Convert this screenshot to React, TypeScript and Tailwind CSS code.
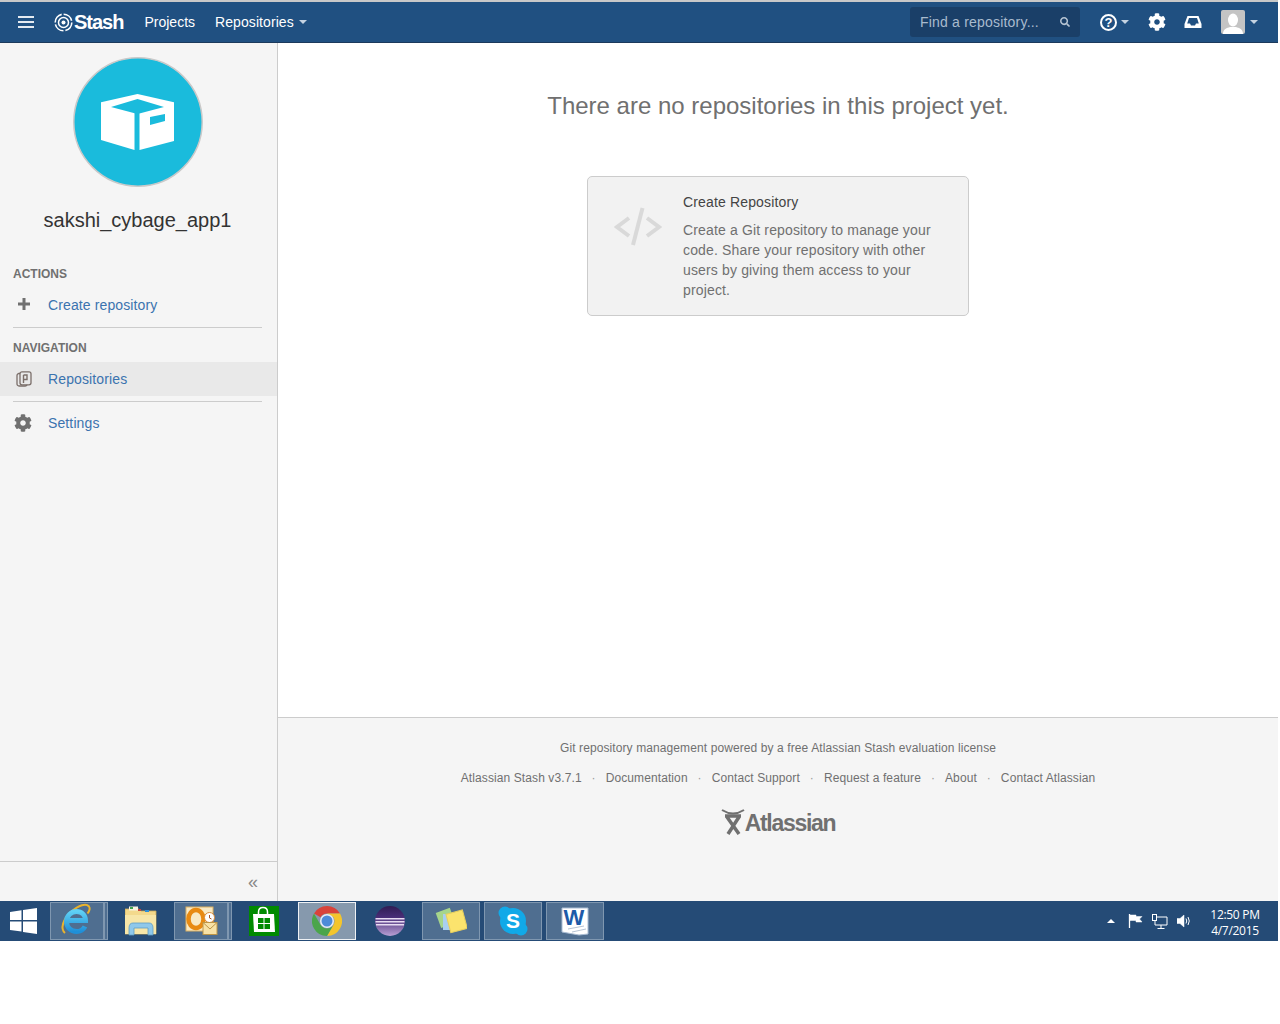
import React from 'react';
import { FaCog, FaSearch } from 'react-icons/fa';

const sans = "font-['Liberation_Sans',Arial,sans-serif]";

const Caret = ({ className = 'border-t-[#c5d3e2]' }: { className?: string }) => (
  <span className={`inline-block w-0 h-0 border-x-4 border-x-transparent border-t-4 ${className}`} />
);

const StashLogo = () => (
  <svg width="19" height="19" viewBox="0 0 19 19" fill="none" stroke="#fff">
    <circle cx="9.5" cy="9.5" r="8.3" strokeWidth="1.6" strokeDasharray="11 2" />
    <circle cx="9.5" cy="9.5" r="5" strokeWidth="1.5" />
    <circle cx="9.5" cy="9.5" r="2" fill="#fff" strokeWidth="0" />
  </svg>
);

const BoxIcon = () => (
  <svg width="130" height="130" viewBox="0 0 130 130" className="block">
    <circle cx="65" cy="65" r="64.2" fill="#1abbdc" stroke="#c9c9c9" strokeWidth="1.5" />
    <polygon fill="#fff" points="28,45.3 64.5,37 101,45.3 101,84 66.5,93 61.5,93 28,83" />
    <polygon fill="#1abbdc" points="38,50 64.5,42 91,50 64.5,57" />
    <rect fill="#1abbdc" x="61.5" y="55" width="5" height="38" />
    <polygon fill="#1abbdc" points="77,60 92,57 92,64 77,68" />
  </svg>
);

const RepoIcon = () => (
  <svg width="16" height="16" viewBox="0 0 16 16" fill="none" stroke="#7b6f6a" strokeWidth="1.3">
    <rect x="1" y="2.5" width="10" height="12.5" rx="2" />
    <rect x="4" y="0.8" width="11" height="13" rx="2" fill="#e9e9e9" />
    <path d="M7.5 4v8M7.5 4h3.5v4.5H7.5" strokeWidth="1.4" />
  </svg>
);

const CodeIcon = () => (
  <svg width="48" height="40" viewBox="0 0 48 40" fill="none" stroke="#d9d9d9" strokeWidth="4">
    <path d="M15 11 3 20l12 9" />
    <path d="M33 11l12 9-12 9" />
    <path d="M28.500 1 19 38" />
  </svg>
);

const AtlassianMark = () => (
  <svg width="24" height="26" viewBox="0 0 24 26" fill="none" stroke="#707070">
    <path d="M1 1q11 7 22 0" strokeWidth="2" />
    <path d="M4 7h16M6 8l12 17M18 8 7 25" strokeWidth="3.500" />
  </svg>
);

const WinLogo = () => (
  <svg width="27" height="26" viewBox="0 0 27 26" fill="#fff">
    <polygon points="0,4 11.500,2.300 11.500,12 0,12" />
    <polygon points="13,2 27,0 27,12 13,12" />
    <polygon points="0,13.500 11.500,13.500 11.500,23.500 0,22" />
    <polygon points="13,13.500 27,13.500 27,26 13,24" />
  </svg>
);

const IeIcon = () => (
  <svg width="32" height="32" viewBox="0 0 32 32" fill="none" className="overflow-visible">
    <defs>
      <linearGradient id="ieBlue" x1="0" y1="0" x2="0" y2="1">
        <stop offset="0" stopColor="#5fd0f5" />
        <stop offset="1" stopColor="#1f8fd8" />
      </linearGradient>
    </defs>
    <path d="M4 28C-1 24 2 14 10 7S25-2 28 1.500c1.500 2 0 5-1.500 7" stroke="#e9b32d" strokeWidth="2" />
    <path d="M6 15.500h18.500c0-5.500-4-9-9-9s-10 4-10 10 4.500 10 10 10c4 0 7-2 8.500-5" stroke="url(#ieBlue)" strokeWidth="5" />
  </svg>
);

const FolderIcon = () => (
  <svg width="32" height="30" viewBox="0 0 32 30">
    <path d="M0 3h14l2 2h15v23H0z" fill="#f3d98c" stroke="#c9a95a" strokeWidth="0.800" />
    <rect x="4" y="0.500" width="9" height="4" fill="#f7f3e0" />
    <rect x="5" y="1" width="3" height="2" fill="#3fa34d" />
    <rect x="13" y="3" width="3" height="2" fill="#c9453a" />
    <rect x="20" y="4" width="4" height="2" fill="#2f8fd8" />
    <path d="M0 9h31v19H0z" fill="#f7e6a8" />
    <path d="M4 29v-7q0-5 4-5h16q4 0 4 5v7h-5v-7H9v7z" fill="#8fc8ea" stroke="#5e9cc5" strokeWidth="0.800" />
  </svg>
);

const OutlookIcon = () => (
  <svg width="33" height="32" viewBox="0 0 33 32">
    <rect x="1" y="2" width="27" height="24" fill="#f8e9c4" stroke="#dcb060" />
    <ellipse cx="11" cy="14" rx="7.500" ry="9" fill="none" stroke="#e88a12" strokeWidth="4.500" />
    <circle cx="24.500" cy="12.500" r="5" fill="#fff" stroke="#d98a3a" />
    <path d="M24.500 10v3l2 1" stroke="#a8552a" fill="none" />
    <rect x="18" y="17.500" width="14" height="12" fill="#f8e2a6" stroke="#bd9546" />
    <path d="M18 17.500l7 6.500 7-6.500" fill="none" stroke="#bd9546" />
  </svg>
);

const StoreIcon = () => (
  <svg width="30" height="30" viewBox="0 0 30 30">
    <rect width="30" height="30" fill="#008a00" />
    <path d="M9.500 9V6q0-4.500 4.500-4.500T18.500 6v3" fill="none" stroke="#fff" strokeWidth="1.500" />
    <path d="M4 8h21l1 18H5z" fill="#fff" />
    <g fill="#008a00">
      <rect x="9" y="12" width="5.500" height="5" />
      <rect x="15.500" y="12" width="5.500" height="5" />
      <rect x="9" y="18" width="5.500" height="5" />
      <rect x="15.500" y="18" width="5.500" height="5" />
    </g>
  </svg>
);

const ChromeIcon = () => (
  <svg width="30" height="30" viewBox="0 0 30 30">
    <path d="M15 0a15 15 0 0 1 13 7.500H15a7.500 7.500 0 0 0-6.500 3.750L2 7.500A15 15 0 0 1 15 0z" fill="#d8433a" />
    <path d="M28 7.500A15 15 0 0 1 15 30l6.500-11.250A7.500 7.500 0 0 0 21.500 11.250L15 7.500z" fill="#f4c52c" />
    <path d="M15 30A15 15 0 0 1 2 7.500l6.500 11.250A7.500 7.500 0 0 0 21.500 18.750z" fill="#4ba54a" />
    <circle cx="15" cy="15" r="7" fill="#e8eef5" />
    <circle cx="15" cy="15" r="5.500" fill="#4d8bd8" />
  </svg>
);

const EclipseIcon = () => (
  <svg width="30" height="30" viewBox="0 0 30 30">
    <defs>
      <linearGradient id="eclipseBall" x1="0" y1="0" x2="0" y2="1">
        <stop offset="0" stopColor="#2f1c52" />
        <stop offset="0.4" stopColor="#4b2f7a" />
        <stop offset="1" stopColor="#b9a0d4" />
      </linearGradient>
    </defs>
    <circle cx="15" cy="15" r="15" fill="url(#eclipseBall)" />
    <g fill="#e8dcf2">
      <rect x="0.500" y="12" width="29" height="1.500" />
      <rect x="0.500" y="15" width="29" height="1.500" />
      <rect x="1" y="18" width="28" height="1.500" />
    </g>
  </svg>
);

const NotesIcon = () => (
  <svg width="32" height="28" viewBox="0 0 32 28">
    <rect x="3" y="3" width="15" height="16" fill="#a6d58b" transform="rotate(-20 10 11)" />
    <rect x="8" y="7" width="15" height="16" fill="#a9cff0" />
    <rect x="13" y="5" width="17" height="19" fill="#fbe36d" stroke="#e8cf5e" transform="rotate(-15 21 14)" />
  </svg>
);

const SkypeIcon = () => (
  <svg width="30" height="30" viewBox="0 0 30 30">
    <circle cx="15" cy="15" r="13" fill="#11a9e8" />
    <circle cx="7" cy="7" r="6.500" fill="#11a9e8" />
    <circle cx="23" cy="23" r="6.500" fill="#11a9e8" />
    <text x="15" y="22" textAnchor="middle" fontSize="21" fontWeight="700" fill="#fff" fontFamily="'Liberation Sans',sans-serif">S</text>
  </svg>
);

const WordIcon = () => (
  <svg width="30" height="30" viewBox="0 0 30 30">
    <path d="M2 2h26v26l-9 1-17-3z" fill="#fff" stroke="#a9bcd3" />
    <text x="14" y="19" textAnchor="middle" fontSize="22" fontWeight="700" fill="#1d5aa8" fontFamily="'Liberation Sans',sans-serif">W</text>
    <path d="M8 23l16-3M12 26l14-3" stroke="#b7c4d4" />
  </svg>
);

const TaskButton = ({ children, active, tail }: { children: React.ReactNode; active?: boolean; tail?: boolean }) => (
  <div className="flex h-[38px]">
    <div className={`h-full flex items-center justify-center border ${active ? 'w-[58px] bg-[#8699ad] border-[#eef1f4]' : tail ? 'w-[54px] bg-[#4f6e90] border-[#7f97b0]' : 'w-[58px] bg-[#4f6e90] border-[#7f97b0]'}`}>
      {children}
    </div>
    {tail && <div className="w-[4px] h-full bg-[#4f6e90] border border-[#7f97b0]" />}
  </div>
);

const Taskbar = () => (
  <div className="h-[40px] bg-[#254b76] flex items-center pl-[10px] shrink-0">
    <WinLogo />
    <div className="ml-[13px]">
      <TaskButton tail><IeIcon /></TaskButton>
    </div>
    <div className="ml-[17px]"><FolderIcon /></div>
    <div className="ml-[17px]">
      <TaskButton tail><OutlookIcon /></TaskButton>
    </div>
    <div className="ml-[17px]"><StoreIcon /></div>
    <div className="ml-[19px]">
      <TaskButton active><ChromeIcon /></TaskButton>
    </div>
    <div className="ml-[19px]"><EclipseIcon /></div>
    <div className="ml-[17px]">
      <TaskButton><NotesIcon /></TaskButton>
    </div>
    <div className="ml-[4px]">
      <TaskButton><SkypeIcon /></TaskButton>
    </div>
    <div className="ml-[4px]">
      <TaskButton><WordIcon /></TaskButton>
    </div>
    <div className="ml-auto flex items-center text-white">
      <span className="w-0 h-0 border-x-[4px] border-x-transparent border-b-[4px] border-b-white" />
      <svg width="15" height="14" viewBox="0 0 15 14" fill="none" stroke="#fff" className="ml-[13px]">
        <path d="M1.500 0v14" strokeWidth="1.300" />
        <path d="M2 1h6v1.500h6L11.500 5 14 8H8V6.500H2z" fill="#fff" strokeWidth="0.500" />
      </svg>
      <svg width="16" height="15" viewBox="0 0 16 15" fill="none" stroke="#fff" className="ml-[9px]">
        <rect x="0.500" y="0.500" width="4" height="6" />
        <path d="M5 3h10v8H3V7M9 11v3M5.500 14.500h7" />
      </svg>
      <svg width="14" height="14" viewBox="0 0 14 14" fill="none" stroke="#fff" className="ml-[9px]">
        <path d="M0 4.500h3L7 1v12L3 9.500H0z" fill="#fff" strokeWidth="0.500" />
        <path d="M9 4.500q1.500 2.500 0 5M11 3q2.500 4 0 8" />
      </svg>
      <div className="ml-[14px] w-[60px] mr-[13px] mt-[3px] text-center text-[12px] leading-[16px] font-['Open_Sans',sans-serif] tracking-[-0.3px]">
        <div>12:50 PM</div>
        <div>4/7/2015</div>
      </div>
    </div>
  </div>
);

const Header = () => (
  <div className="h-[43px] border-t-2 border-t-[#c8c8c8] bg-[#205081] flex items-center text-white text-[14px] shrink-0 border-b border-b-[#1c3a5c]">
    <svg width="16" height="12" viewBox="0 0 16 12" stroke="#e4eaf1" strokeWidth="2" className="ml-[18px]">
      <path d="M0 1h16M0 6h16M0 11h16" />
    </svg>
    <div className="ml-[20px]"><StashLogo /></div>
    <span className="ml-[1px] text-[20px] font-bold tracking-[-1px] leading-none">Stash</span>
    <span className="ml-[21px]">Projects</span>
    <span className="ml-[20px] flex items-center gap-[5px] tracking-[0.08px]">
      Repositories <Caret />
    </span>
    <div className="ml-auto flex items-center">
      <div className="w-[170px] h-[30px] rounded-[3px] bg-[#1a3f68] flex items-center justify-between pl-[10px] pr-[10px] text-[#a9bbce]">
        <span className="tracking-[0.2px]">Find a repository...</span>
        <FaSearch className="w-[10px] h-[10px] text-[#b6c4d3]" />
      </div>
      <div className="ml-[20px] flex items-center gap-[4px]">
        <span className="w-[17px] h-[17px] rounded-full border-2 border-white flex items-center justify-center text-[13px] font-bold leading-none">?</span>
        <Caret />
      </div>
      <FaCog className="ml-[19px] w-[18px] h-[18px]" />
      <svg width="18" height="14" viewBox="0 0 18 14" className="ml-[18px]">
        <path d="M3.500 1h11L17.500 9v4h-17V9z" fill="#fff" />
        <path d="M5 3h8l1.800 5.500H12l-1 2H7l-1-2H3.200z" fill="#205081" />
      </svg>
      <div className="ml-[19px] w-[24px] h-[24px] rounded-[2px] bg-[#c4c4c4] overflow-hidden flex flex-col items-center justify-end">
        <svg width="20" height="21" viewBox="0 0 20 21" fill="#fff">
          <ellipse cx="10" cy="7" rx="5" ry="6.500" />
          <path d="M0 21c0-5 4-6 7-7h6c3 1 7 2 7 7z" />
        </svg>
      </div>
      <span className="ml-[5px] mr-[20px] flex"><Caret /></span>
    </div>
  </div>
);

const NavItem = ({ icon, label, active }: { icon: React.ReactNode; label: string; active?: boolean }) => (
  <div className={`flex items-center h-[34px] pl-[13px] ${active ? 'bg-[#e9e9e9]' : ''}`}>
    <span className="w-[35px] flex items-center">{icon}</span>
    <span className="text-[14px] text-[#3b73af] tracking-[0.12px]">{label}</span>
  </div>
);

const Sidebar = () => (
  <div className="w-[278px] shrink-0 bg-[#f5f5f5] border-r border-r-[#cccccc] flex flex-col">
    <div className="flex flex-col items-center pt-[14px] pr-[2px]">
      <BoxIcon />
      <div className="mt-[19px] text-[20px] leading-[28px] text-[#333333]">sakshi_cybage_app1</div>
    </div>
    <div className="mt-[32px] pl-[13px] text-[12px] font-bold leading-[16px] text-[#707070]">ACTIONS</div>
    <div className="mt-[6px]">
      <NavItem
        label="Create repository"
        icon={
          <svg width="12" height="12" viewBox="0 0 12 12" fill="#707070" className="ml-[5px] -mt-[3px]">
            <path d="M4.500 0h3v4.500H12v3H7.500V12h-3V7.500H0v-3h4.500z" />
          </svg>
        }
      />
    </div>
    <div className="mx-[13px] w-[249px] mt-[5px] border-t border-t-[#cccccc]" />
    <div className="mt-[12px] pl-[13px] text-[12px] font-bold leading-[16px] text-[#707070]">NAVIGATION</div>
    <div className="mt-[6px]">
      <NavItem label="Repositories" active icon={<span className="ml-[3px] flex"><RepoIcon /></span>} />
    </div>
    <div className="mx-[13px] w-[249px] mt-[5px] border-t border-t-[#cccccc]" />
    <div className="mt-[4px]">
      <NavItem label="Settings" icon={<FaCog className="ml-[1px] w-[18px] h-[18px] text-[#707070]" />} />
    </div>
    <div className="mt-auto h-[40px] border-t border-t-[#cccccc] flex items-center justify-end pr-[19px] text-[#888888] text-[18px] leading-none">
      «
    </div>
  </div>
);

const links = ['Atlassian Stash v3.7.1', 'Documentation', 'Contact Support', 'Request a feature', 'About', 'Contact Atlassian'];

const Footer = () => (
  <div className="h-[184px] shrink-0 bg-[#f5f5f5] border-t border-t-[#cccccc] flex flex-col items-center text-[12px] text-[#707070] pt-[21px] tracking-[0.1px]">
    <div className="leading-[18px]">Git repository management powered by a free Atlassian Stash evaluation license</div>
    <div className="mt-[12px] flex items-center leading-[18px]">
      {links.map((l, i) => (
        <React.Fragment key={l}>
          {i > 0 && <span className="w-[24px] text-center text-[#999999]">·</span>}
          <span>{l}</span>
        </React.Fragment>
      ))}
    </div>
    <div className="mt-[22px] flex items-end">
      <AtlassianMark />
      <span className="text-[23px] leading-[24px] font-bold tracking-[-1.3px]">Atlassian</span>
    </div>
  </div>
);

export default function App() {
  return (
    <div className={`w-[1278px] h-[1024px] bg-white ${sans}`}>
      <Header />
      <div className="flex h-[858px]">
        <Sidebar />
        <div className="flex-1 flex flex-col min-w-0">
          <div className="flex-1 flex flex-col items-center pt-[47px]">
            <h2 className="text-[24px] leading-[32px] text-[#707070]">There are no repositories in this project yet.</h2>
            <div className="mt-[54px] w-[382px] h-[140px] bg-[#f2f2f2] border border-[#cccccc] rounded-[5px] flex">
              <div className="ml-[26px] mt-[30px]"><CodeIcon /></div>
              <div className="ml-[21px] mt-[15px] w-[260px] text-[14px] leading-[20px] tracking-[0.15px]">
                <div className="text-[#444444]">Create Repository</div>
                <p className="mt-[8px] text-[#707070]">
                  Create a Git repository to manage your code. Share your repository with other users by giving them access to your project.
                </p>
              </div>
            </div>
          </div>
          <Footer />
        </div>
      </div>
      <Taskbar />
    </div>
  );
}
